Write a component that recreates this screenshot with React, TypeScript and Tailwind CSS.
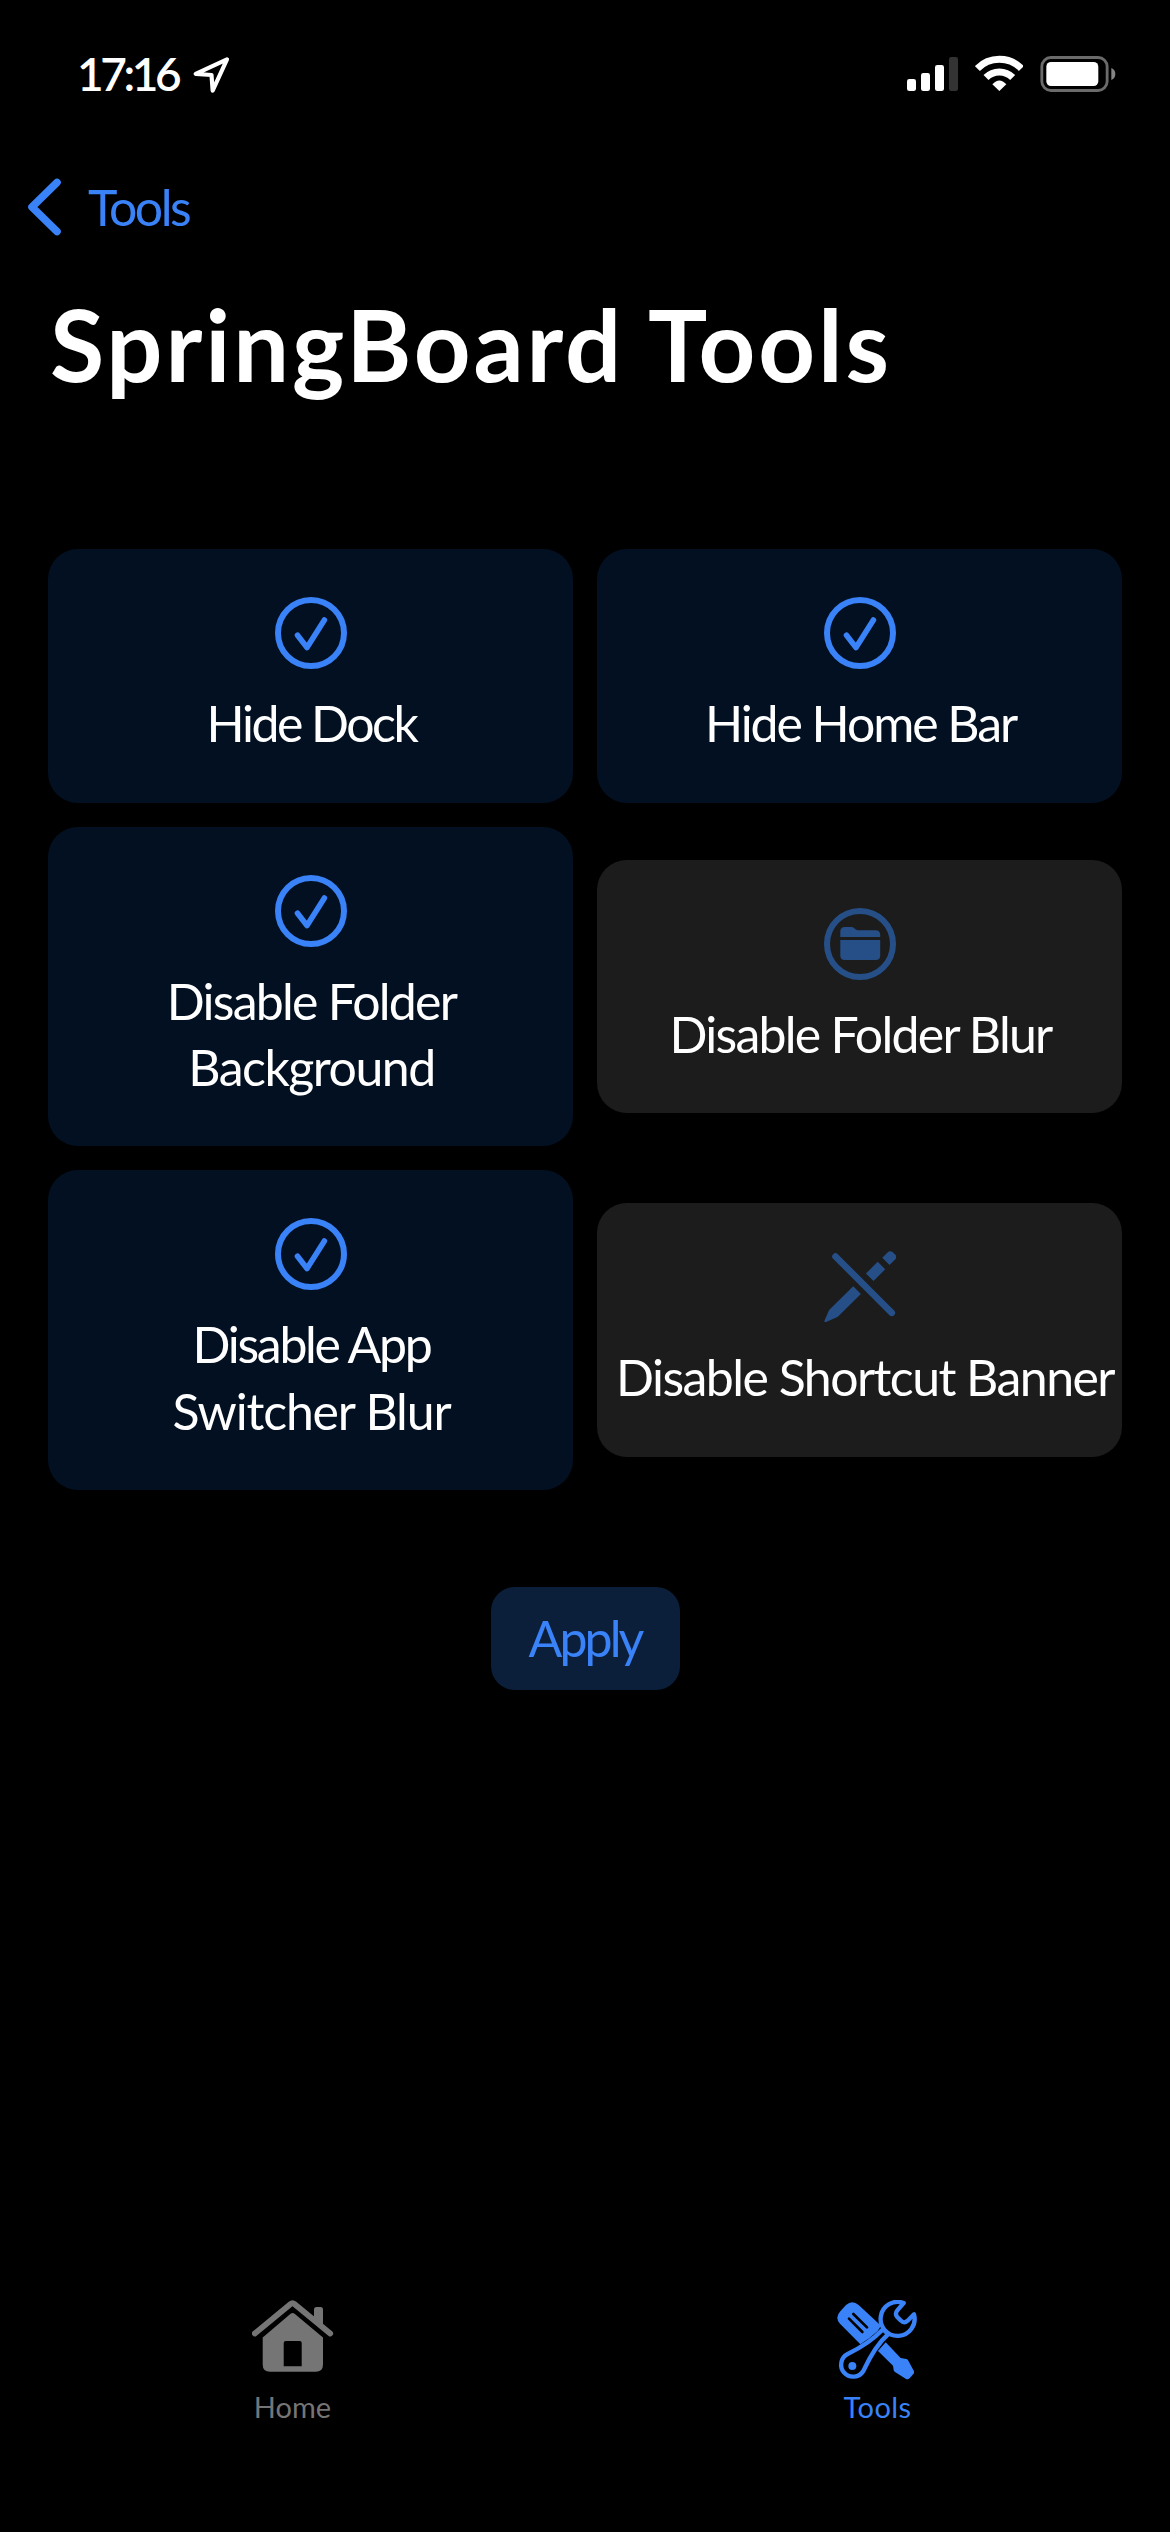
import type { ReactNode } from "react";

function CheckIcon() {
  return (
    <svg className="size-[72px] shrink-0" viewBox="0 0 72 72" fill="none" stroke="#3a82f7" strokeLinecap="round" strokeLinejoin="round">
      <circle cx="36" cy="36" r="33" strokeWidth="6" />
      <path d="M22.5 38.3 L32 50.5 L49.4 23" strokeWidth="5.6" />
    </svg>
  );
}

function FolderIcon() {
  return (
    <svg className="size-[72px] shrink-0" viewBox="0 0 72 72" fill="#264f88">
      <circle cx="36" cy="36" r="33" strokeWidth="6" stroke="#264f88" fill="none" />
      <path d="M16.3 29 V23.5 Q16.3 19 21 19 H27 Q29 19 30.3 20.2 L31.5 21.3 Q32.6 22.3 34.2 22.3 H51.5 Q56.2 22.3 56.2 27 V29 Z" />
      <path d="M16.3 32 H56.2 V47.5 Q56.2 52 51.7 52 H20.8 Q16.3 52 16.3 47.5 Z" />
    </svg>
  );
}

function PencilSlashIcon() {
  return (
    <svg className="size-[72px] shrink-0" viewBox="823.5 1251 72 72" fill="#264f88">
      <path d="M835 1256.5 L891.3 1312.8" stroke="#264f88" strokeWidth="6.6" strokeLinecap="round" />
      <path d="M881.8 1257.7 L886.8 1252.7 Q889.3 1250 892.3 1252.3 L894.6 1254.6 Q897 1257 894.6 1259.6 L889 1265 Z" />
      <path d="M877.2 1261.7 L884.7 1269.3 L873 1281 L865.4 1273.6 Z" />
      <path d="M852.7 1286.2 L860.4 1293.9 L838.6 1315.6 Q837.6 1316.6 836.3 1317.2 L825.6 1322 Q823.4 1322.5 824.1 1320.3 L828.2 1310.9 Q828.6 1310 829.4 1309.3 Z" />
    </svg>
  );
}

function Card({ muted, icon, children }: { muted?: boolean; icon: ReactNode; children: ReactNode }) {
  return (
    <button
      className={
        "flex w-full flex-col items-center rounded-[30px] pt-12 pb-[46px] text-[50px] text-white " +
        (muted ? "bg-[#1c1c1c]" : "bg-[#021022]")
      }
    >
      {icon}
      <span className="mt-[21px] flex flex-col items-center pl-[2px] leading-[66.33px] whitespace-nowrap">{children}</span>
    </button>
  );
}

export default function App() {
  return (
    <div className="flex h-[2532px] w-[1170px] flex-col bg-black font-['Lato','Open_Sans',sans-serif] text-white">
      <header className="flex h-[149px] items-start justify-between pr-[54px] pl-[77px]">
        <div className="flex">
          <div className="mt-[49px] w-[115px] text-[46px] leading-[50px] font-semibold tracking-[-3.4px]">17:16</div>
          <svg className="mt-[55px] size-10" viewBox="575 75 120 120" fill="none" stroke="white" strokeWidth="12.5" strokeLinejoin="round">
            <path d="M680 88 L586 131.5 L633.5 135 L637 182 Z" />
          </svg>
        </div>
        <div className="mt-[55px] flex items-start">
          <svg className="h-9 w-[51px]" viewBox="81 75 153 108" fill="white">
            <rect x="81" y="147" width="27" height="36" rx="7" />
            <rect x="123" y="129" width="27" height="54" rx="7" />
            <rect x="165" y="105" width="27" height="78" rx="7" />
            <rect x="207" y="81" width="27" height="102" rx="7" fill="#333" />
          </svg>
          <svg className="ml-[16.7px] h-9 w-[48.7px]" viewBox="284 75 146 108" fill="none" stroke="white" strokeWidth="21">
            <path d="M291 115.5 A92 92 0 0 1 423 115.5" />
            <path d="M317 142.5 A56 56 0 0 1 397 142.5" />
            <path d="M336 163 Q357 140 378 163 L357 183 Z" fill="white" stroke="none" />
          </svg>
          <svg className="ml-[15.3px] h-[38px] w-[77.3px]" viewBox="476 75 232 114">
            <rect x="484.5" y="82.5" width="196" height="99" rx="27" fill="none" stroke="#6b6b6b" strokeWidth="8.5" />
            <rect x="498" y="96" width="156" height="72" rx="14" fill="white" />
            <path d="M693 114 Q705 119 705 132 Q705 145 693 150 Z" fill="#858585" />
          </svg>
        </div>
      </header>

      <nav className="flex h-[116px] items-center text-[#3a82f7]">
        <svg className="ml-[25px] h-[60px] w-10" viewBox="25 177 40 60" fill="none" stroke="currentColor" strokeWidth="7.6" strokeLinecap="round" strokeLinejoin="round">
          <path d="M57 182.5 L32 207 L57 231.5" />
        </svg>
        <span className="mb-px ml-[23px] text-[50px] leading-[60px] tracking-[-2.5px]">Tools</span>
      </nav>

      <h1 className="mt-[19px] pl-[50px] text-[99px] leading-[120px] font-bold tracking-[2.9px]">SpringBoard Tools</h1>

      <main className="mt-[145.3px] grid grid-cols-2 items-center gap-6 px-12">
        <Card icon={<CheckIcon />}>
          <span className="tracking-[-2.5px]">Hide Dock</span>
        </Card>
        <Card icon={<CheckIcon />}>
          <span className="tracking-[-2.07px]">Hide Home Bar</span>
        </Card>
        <Card icon={<CheckIcon />}>
          <span className="tracking-[-1.75px]">Disable Folder</span>
          <span className="tracking-[-1.48px]">Background</span>
        </Card>
        <Card muted icon={<FolderIcon />}>
          <span className="tracking-[-1.75px]">Disable Folder Blur</span>
        </Card>
        <Card icon={<CheckIcon />}>
          <span className="tracking-[-2.3px]">Disable App</span>
          <span className="tracking-[-1.17px]">Switcher Blur</span>
        </Card>
        <Card muted icon={<PencilSlashIcon />}>
          <span className="pl-[9px] tracking-[-1.55px]">Disable Shortcut Banner</span>
        </Card>
      </main>

      <button className="mt-[97px] flex h-[103px] w-[189px] items-center justify-center self-center rounded-3xl bg-[#0b1f3b] text-[50px] tracking-[-2.9px] text-[#3a82f7]">
        Apply
      </button>

      <footer className="mt-auto grid grid-cols-2 pb-[107px] text-[29px] leading-9">
        <a className="flex flex-col items-center text-[#757575]">
          <svg className="h-20 w-[82px]" viewBox="0 0 82 80" fill="currentColor">
            <path d="M2.8 33.5 L38.6 4 Q40.5 2.4 42.4 4 L78.2 33.5" fill="none" stroke="currentColor" strokeWidth="5.8" strokeLinecap="round" />
            <path d="M62 20 V9.5 Q62 7 64.5 7 H68.5 Q71 7 71 9.5 V29 L62 21 Z" />
            <path fillRule="evenodd" d="M10.7 37.5 L38.6 13.8 Q40.6 12 42.6 13.8 L71 37.5 V64.5 Q71 71.8 63.7 71.8 H18 Q10.7 71.8 10.7 64.5 Z M31.7 66.2 H49.7 V43 Q49.7 41 47.7 41 H33.7 Q31.7 41 31.7 43 Z" />
          </svg>
          <span className="mt-[9px]">Home</span>
        </a>
        <a className="flex flex-col items-center text-[#3a82f7]">
          <svg className="h-20 w-[83px]" viewBox="105 89 249 240" fill="currentColor">
            <path d="M118 123 L135 104 Q154 87 173 104 L240 166 L230 182 Q208 203 178 222 L117 160 Q100 142 118 123 Z" />
            <path d="M144 145 L184 185 M157 131 L198 171" stroke="black" strokeWidth="8" strokeLinecap="round" />
            <path d="M254 216 L299 263 L316 266 Q320 267 322 271 L339 303 Q340 308 337 311 L326 324 Q320 329 314 325 L282 305 Q278 302 278 299 L276 286 L231 242 Z" />
            <g fill="black" stroke="currentColor" strokeWidth="13" strokeLinejoin="round">
              <path d="M246 177 Q205 220 140 251 A36 36 0 1 0 187 302 Q222 226 262 191 Z" />
              <path d="M308 98 A51 51 0 1 0 339 132 L320 151 Q309 161 300 151 L288 139 Q281 130 289 120 Z" />
            </g>
            <circle cx="154" cy="287" r="12" />
          </svg>
          <span className="mt-[9px] tracking-[0.4px]">Tools</span>
        </a>
      </footer>
    </div>
  );
}
